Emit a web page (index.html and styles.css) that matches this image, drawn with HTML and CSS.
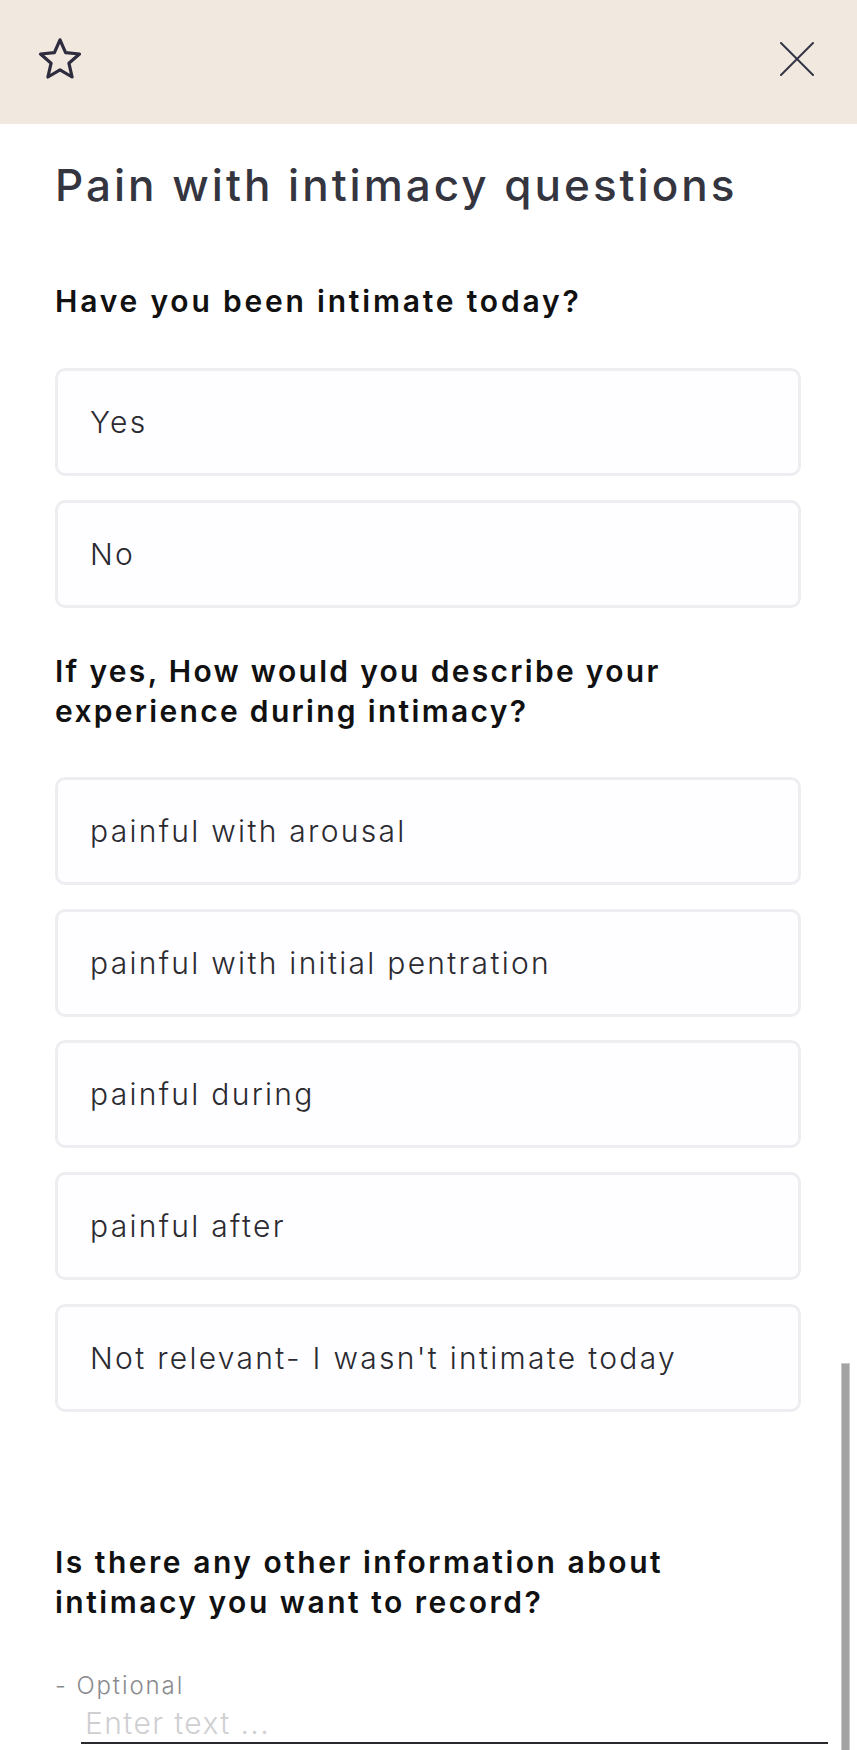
FILE: index.html
```html
<!DOCTYPE html>
<html lang="en">
<head>
    <meta charset="UTF-8">
    <meta name="viewport" content="width=device-width, initial-scale=1.0">
    <title>Pain with intimacy questions</title>
    <link rel="stylesheet" href="styles.css">
</head>
<body>
    <div class="topbar">
        <button class="icon-btn star-btn" aria-label="Favourite">
            <svg width="48" height="48" viewBox="0 0 24 24" fill="none" stroke="#2e2c3e" stroke-width="1.6" stroke-linejoin="round">
                <path d="M12 1.4l2.8 6.45 6.95.65-5.3 4.6 1.6 6.9L12 16.4l-6.05 3.6 1.6-6.9-5.3-4.6 6.95-.65z"/>
            </svg>
        </button>
        <button class="icon-btn close-btn" aria-label="Close">
            <svg width="34" height="34" viewBox="0 0 34 34" fill="none" stroke="#333345" stroke-width="2" stroke-linecap="round">
                <line x1="1" y1="1" x2="33" y2="33"/>
                <line x1="33" y1="1" x2="1" y2="33"/>
            </svg>
        </button>
    </div>

    <div class="content">
        <h1 class="title">Pain with intimacy questions</h1>

        <h3 class="question q-first">Have you been intimate today?</h3>
        <div class="options">
            <div class="option">Yes</div>
            <div class="option">No</div>
        </div>

        <h3 class="question q-second">If yes, How would you describe your<br>experience during intimacy?</h3>
        <div class="options">
            <div class="option">painful with arousal</div>
            <div class="option">painful with initial pentration</div>
            <div class="option">painful during</div>
            <div class="option">painful after</div>
            <div class="option">Not relevant- I wasn't intimate today</div>
        </div>

        <h3 class="question q-third">Is there any other information about<br>intimacy you want to record?</h3>
        <div class="optional">- Optional</div>
        <input class="note-input" type="text" placeholder="Enter text ...">
    </div>

    <div class="scrollbar"></div>
</body>
</html>
```

FILE: styles.css
```css
body {
    margin: 0;
    background-color: #ffffff;
    font-family: "Inter", "Noto Sans", sans-serif;
    position: relative;
    height: 1750px;
    overflow: hidden;
}
.topbar {
    height: 124px;
    background-color: #f1e9df;
    display: flex;
    align-items: center;
    justify-content: space-between;
    padding: 0 43px 0 36px;
}
.icon-btn {
    background: none;
    border: none;
    padding: 0;
    display: flex;
    cursor: pointer;
}
.star-btn {
    margin-top: -2px;
}
.close-btn {
    margin-top: -6px;
}
.content {
    padding: 0 56px 0 55px;
}
.title {
    margin: 35px 0 0 0;
    font-size: 44px;
    line-height: 52px;
    font-weight: 500;
    color: #35353f;
    letter-spacing: 3px;
}
.question {
    margin: 0;
    font-size: 30px;
    line-height: 40px;
    font-weight: 600;
    color: #111111;
    letter-spacing: 2.5px;
}
.q-first {
    margin-top: 70px;
    margin-bottom: 47px;
    letter-spacing: 2.8px;
}
.q-second {
    margin-top: 43px;
    margin-bottom: 46px;
    letter-spacing: 2.3px;
}
.q-third {
    margin-top: 130px;
}
.options {
    display: flex;
    flex-direction: column;
    gap: 23.75px;
}
.option {
    box-sizing: border-box;
    height: 108px;
    border: 3px solid #efedf1;
    border-radius: 10px;
    background-color: #fefdff;
    display: flex;
    align-items: center;
    padding-left: 32px;
    font-size: 30px;
    font-weight: 300;
    color: #2a2a30;
    letter-spacing: 2.3px;
}
.optional {
    margin-top: 49px;
    font-size: 24px;
    line-height: 30px;
    font-weight: 300;
    color: #8a8a8e;
    letter-spacing: 1.9px;
}
.note-input {
    display: block;
    box-sizing: border-box;
    margin: 3px 0 0 26px;
    width: 747px;
    height: 40px;
    border: none;
    border-bottom: 2px solid #2a2a2e;
    padding: 0 0 0 4px;
    font-family: "Inter", "Noto Sans", sans-serif;
    font-size: 30px;
    font-weight: 300;
    letter-spacing: 1.4px;
    color: #333333;
    background: transparent;
    outline: none;
}
.note-input::placeholder {
    color: #cfcfd2;
}
.scrollbar {
    position: absolute;
    left: 841px;
    top: 1363px;
    width: 7px;
    bottom: 0;
    background-color: #a3a3a3;
    border: 1px solid #c8c8c8;
    border-bottom: none;
}
```
